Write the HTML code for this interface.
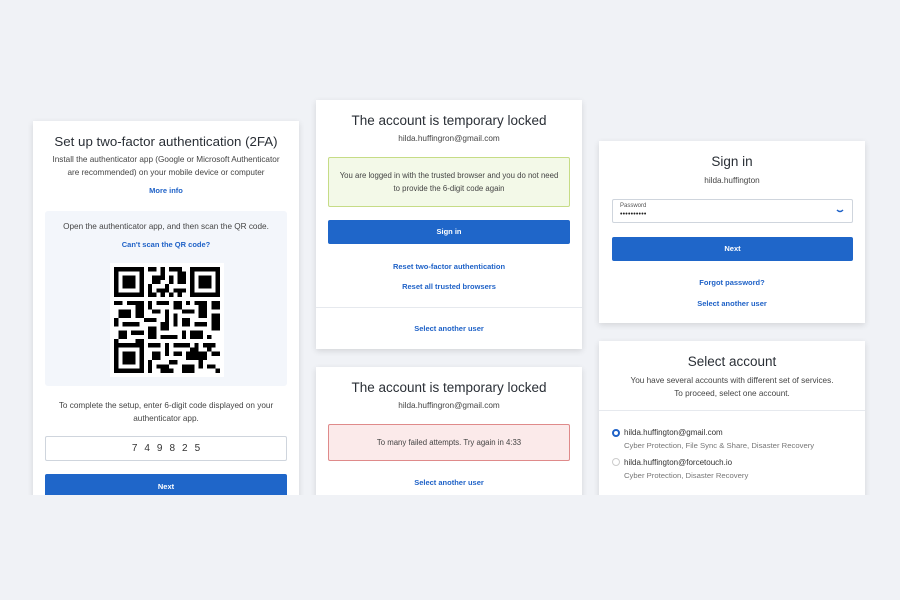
<!DOCTYPE html>
<html><head><meta charset="utf-8"><style>
*{box-sizing:border-box;margin:0;padding:0}
body{width:900px;height:600px;background:#f0f2f6;font-family:"Liberation Sans",sans-serif;color:#333;position:relative;overflow:hidden}
.card{position:absolute;background:#fff;box-shadow:0 2px 6px rgba(0,0,0,.12);overflow:hidden}
.a{position:absolute;left:0;right:0;text-align:center;white-space:nowrap}
.t{font-size:13.5px;color:#2a2f36}
.s{font-size:8.2px;color:#444}
.l{font-size:7.5px;color:#1f62c7;font-weight:bold}
.btn{position:absolute;background:#1f66c9;border-radius:2px;color:#fff;font-size:7.5px;font-weight:bold;text-align:center}
.cut{position:absolute;left:0;top:495px;width:900px;height:105px;background:#f0f2f6}
</style></head><body>

<div class="card" style="left:33px;top:121px;width:266px;height:380px">
 <div class="a t" style="top:13px;font-size:13.3px">Set up two-factor authentication (2FA)</div>
 <div class="a s" style="top:34px">Install the authenticator app (Google or Microsoft Authenticator</div>
 <div class="a s" style="top:47px">are recommended) on your mobile device or computer</div>
 <div class="a l" style="top:65px">More info</div>
 <div style="position:absolute;left:12px;top:90px;width:242px;height:175px;background:#f3f6fb;border-radius:3px"></div>
 <div class="a s" style="top:101px">Open the authenticator app, and then scan the QR code.</div>
 <div class="a l" style="top:119px">Can't scan the QR code?</div>
 <svg style="position:absolute;left:77px;top:142px" width="114" height="114" viewBox="-1 -1 27 27" shape-rendering="crispEdges">
  <rect x="-1" y="-1" width="27" height="27" fill="#fff"/>
  <g fill="#000">
   <path d="M0 0h7v7h-7zM18 0h7v7h-7zM0 18h7v7h-7z"/>
  </g>
  <g fill="#fff"><path d="M1 1h5v5h-5zM19 1h5v5h-5zM1 19h5v5h-5z"/></g>
  <g fill="#000"><path d="M2 2h3v3h-3zM20 2h3v3h-3zM2 20h3v3h-3z"/>
  <path d="M8 0h2v1h-2zM11 0h1v3h-1zM13 0h3v1h-3zM9 2h2v2h-2zM13 2h1v2h-1zM15 1h2v3h-2zM8 4h1v3h-1zM10 5h2v1h-2zM12 4h1v2h-1zM14 5h3v1h-3zM9 6h1v1h-1zM11 6h1v1h-1zM13 6h1v1h-1zM15 6h1v1h-1z"/>
  <path d="M0 8h2v1h-2zM3 8h4v1h-4zM8 8h1v2h-1zM10 8h3v1h-3zM14 8h2v2h-2zM17 8h1v1h-1zM19 8h3v1h-3zM23 8h2v2h-2zM1 10h3v2h-3zM5 9h2v3h-2zM9 10h2v1h-2zM12 10h1v3h-1zM16 10h3v1h-3zM20 9h2v3h-2zM0 12h1v2h-1zM2 13h4v1h-4zM7 12h3v1h-3zM11 13h2v2h-2zM14 11h1v3h-1zM16 12h2v2h-2zM19 13h3v1h-3zM23 11h2v4h-2zM1 15h2v2h-2zM4 15h3v1h-3zM8 14h2v3h-2zM11 16h4v1h-4zM16 15h1v2h-1zM18 15h3v2h-3zM22 16h1v1h-1zM0 17h1v1h-1zM5 17h2v1h-2z"/>
  <path d="M8 18h3v1h-3zM12 18h1v3h-1zM14 18h4v1h-4zM19 18h1v2h-1zM21 18h3v1h-3zM9 20h2v2h-2zM14 20h2v1h-2zM17 20h5v2h-5zM23 20h2v1h-2zM8 22h1v3h-1zM10 23h3v1h-3zM13 22h2v1h-2zM16 23h3v2h-3zM20 22h1v2h-1zM22 23h2v1h-2zM24 24h1v1h-1zM11 24h3v1h-3zM18 19h1v1h-1zM22 19h1v1h-1z"/></g>
 </svg>
 <div class="a s" style="top:280px">To complete the setup, enter 6-digit code displayed on your</div>
 <div class="a s" style="top:293px">authenticator app.</div>
 <div style="position:absolute;left:12px;top:315px;width:242px;height:25px;border:1px solid #cfd5dd;border-radius:2px;text-align:center;line-height:23px;font-size:10px;letter-spacing:7px;color:#333;padding-left:7px">749825</div>
 <div class="btn" style="left:12px;top:353px;width:242px;height:26px;line-height:26px">Next</div>
</div>

<div class="card" style="left:316px;top:100px;width:266px;height:249px">
 <div class="a t" style="top:13px">The account is temporary locked</div>
 <div class="a s" style="top:34px">hilda.huffingron@gmail.com</div>
 <div style="position:absolute;left:12px;top:57px;width:242px;height:50px;background:#f3f9e8;border:1px solid #c6dc86;border-radius:2px"></div>
 <div class="a s" style="top:71px;font-size:7.8px">You are logged in with the trusted browser and you do not need</div>
 <div class="a s" style="top:84px;font-size:7.8px">to provide the 6-digit code again</div>
 <div class="btn" style="left:12px;top:120px;width:242px;height:24px;line-height:24px">Sign in</div>
 <div class="a l" style="top:162px">Reset two-factor authentication</div>
 <div class="a l" style="top:182px">Reset all trusted browsers</div>
 <div style="position:absolute;left:0;right:0;top:207px;border-top:1px solid #e6e9ee"></div>
 <div class="a l" style="top:224px">Select another user</div>
</div>

<div class="card" style="left:316px;top:367px;width:266px;height:140px">
 <div class="a t" style="top:13px">The account is temporary locked</div>
 <div class="a s" style="top:34px">hilda.huffingron@gmail.com</div>
 <div style="position:absolute;left:12px;top:57px;width:242px;height:37px;background:#fbeaea;border:1px solid #df8a8a;border-radius:2px"></div>
 <div class="a s" style="top:71px;font-size:7.8px">To many failed attempts. Try again in 4:33</div>
 <div class="a l" style="top:111px">Select another user</div>
</div>

<div class="card" style="left:599px;top:141px;width:266px;height:182px">
 <div class="a t" style="top:13px">Sign in</div>
 <div class="a s" style="top:35px">hilda.huffington</div>
 <div style="position:absolute;left:13px;top:58px;width:241px;height:24px;border:1px solid #cfd5dd;border-radius:2px">
  <div style="position:absolute;left:7px;top:3px;font-size:6px;color:#555">Password</div>
  <div style="position:absolute;left:7px;top:11px;font-size:7px;color:#222;letter-spacing:0.2px">••••••••••</div>
  <svg style="position:absolute;right:8px;top:9px" width="8" height="5" viewBox="0 0 8 5"><path d="M1 1q3 3 6 0" stroke="#1f62c7" stroke-width="1.5" fill="none"/></svg>
 </div>
 <div class="btn" style="left:13px;top:96px;width:241px;height:24px;line-height:24px">Next</div>
 <div class="a l" style="top:137px">Forgot password?</div>
 <div class="a l" style="top:158px">Select another user</div>
</div>

<div class="card" style="left:599px;top:341px;width:266px;height:170px">
 <div class="a t" style="top:13px">Select account</div>
 <div class="a s" style="top:35px">You have several accounts with different set of services.</div>
 <div class="a s" style="top:48px">To proceed, select one account.</div>
 <div style="position:absolute;left:0;right:0;top:69px;border-top:1px solid #e6e9ee"></div>
 <div style="position:absolute;left:13px;top:88px;width:8px;height:8px;border-radius:50%;border:2.5px solid #1f62c7"></div>
 <div style="position:absolute;left:25px;top:87px;font-size:8px;color:#333">hilda.huffington@gmail.com</div>
 <div style="position:absolute;left:25px;top:100px;font-size:7.7px;color:#777">Cyber Protection, File Sync &amp; Share, Disaster Recovery</div>
 <div style="position:absolute;left:13px;top:117px;width:8px;height:8px;border-radius:50%;border:1px solid #ccc"></div>
 <div style="position:absolute;left:25px;top:117px;font-size:8px;color:#333">hilda.huffington@forcetouch.io</div>
 <div style="position:absolute;left:25px;top:130px;font-size:7.7px;color:#777">Cyber Protection, Disaster Recovery</div>
</div>

<div class="cut"></div>
</body></html>
